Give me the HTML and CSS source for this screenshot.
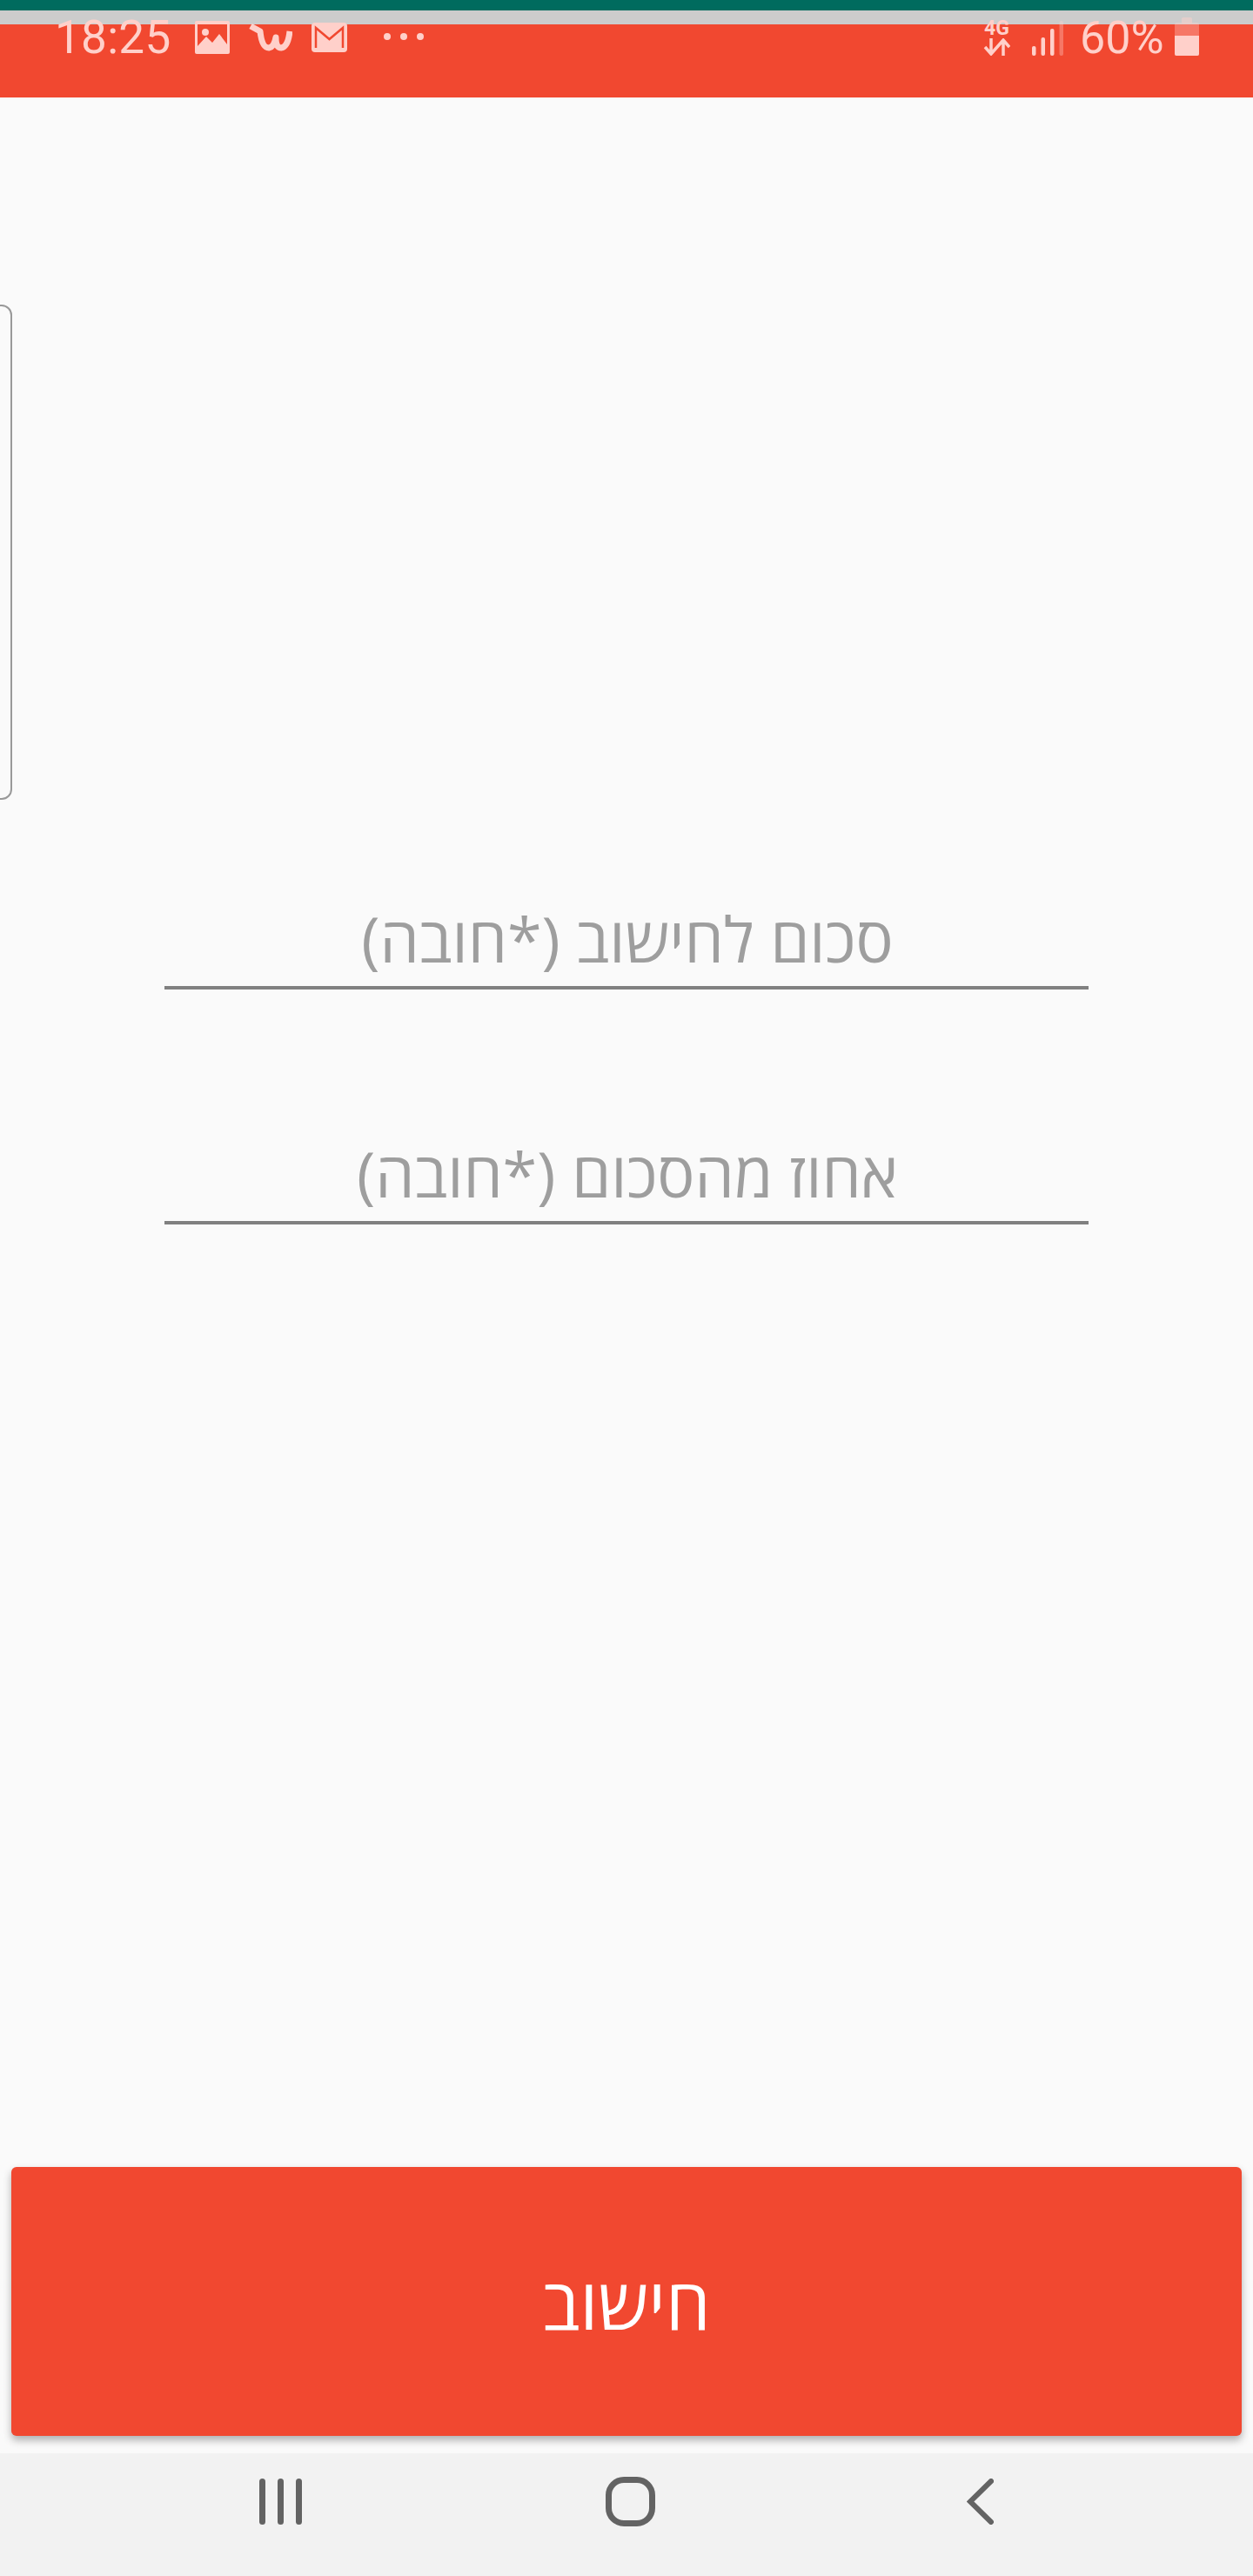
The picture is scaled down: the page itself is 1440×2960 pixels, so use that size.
FILE: index.html
```html
<!DOCTYPE html>
<html lang="he">
  <head>
    <meta charset="UTF-8" />
    <meta name="viewport" content="width=device-width, initial-scale=1.0" />
    <title>חישוב אחוזים</title>
    <link rel="stylesheet" href="styles.css">
  </head>
  <body>
    <div class="top-strip"></div>

    <!-- Status bar -->
    <div class="status-bar">
      <span class="time">18:25</span>
      <svg class="icon-image" width="40" height="38" viewBox="0 0 40 38">
        <rect width="40" height="38" rx="2" fill="#ffd0ca" />
        <rect x="3" y="4" width="34" height="27" fill="#f14830" />
        <circle cx="12" cy="13" r="4" fill="#ffd0ca" />
        <path d="M3 29 L13 18 L20 25 L28 15 L37 27 V32 H3 Z" fill="#ffd0ca" />
      </svg>
      <svg class="icon-wish" width="50" height="34" viewBox="0 0 50 34">
        <path d="M2 4 L13 10 Q15 29 23 29 Q29 28 31 17 Q31 29 37 29 Q45 28 47 10" fill="none" stroke="#ffd0ca" stroke-width="7" stroke-linejoin="round" />
      </svg>
      <svg class="icon-mail" width="41" height="34" viewBox="0 0 41 34">
        <rect width="41" height="34" rx="4" fill="#ffd0ca" />
        <path d="M5 29 V6 L20.5 19 L36 6 V29" fill="none" stroke="#f14830" stroke-width="2.5" />
      </svg>
      <div class="dots"><i></i><i></i><i></i></div>

      <div class="status-right">
        <div class="network">
          <span>4G</span>
          <svg width="31" height="20" viewBox="0 0 31 20">
            <path d="M9 0 V17 M2 10 L9 18 L16 10 M23 20 V3 M16 10 L23 2 L30 10" fill="none" stroke="#ffd0ca" stroke-width="3.5" />
          </svg>
        </div>
        <svg class="signal" width="36" height="40" viewBox="0 0 36 40">
          <rect x="0" y="29" width="4.5" height="11" rx="2" fill="#ffd0ca" />
          <rect x="10.5" y="19" width="4.5" height="21" rx="2" fill="#ffd0ca" />
          <rect x="21" y="9" width="4.5" height="31" rx="2" fill="#ffd0ca" />
          <rect x="31.5" y="0" width="4.5" height="40" rx="2" fill="#ffd0ca" opacity="0.35" />
        </svg>
        <span class="battery-text">60%</span>
        <svg class="battery" width="28" height="44" viewBox="0 0 28 44">
          <rect x="8" y="0" width="12" height="7" rx="1.5" fill="#ffd0ca" opacity="0.45" />
          <rect x="0" y="6" width="28" height="38" rx="2" fill="#ffd0ca" opacity="0.35" />
          <path d="M0 21 H28 V42 a2 2 0 0 1 -2 2 H2 a2 2 0 0 1 -2 -2 Z" fill="#ffd0ca" />
        </svg>
      </div>
    </div>

    <div class="content">
      <!-- Edge of a card that is scrolled off to the left -->
      <div class="side-frame"></div>

      <div class="field field-first">סכום לחישוב (*חובה)</div>
      <div class="field field-second">אחוז מהסכום (*חובה)</div>

      <button class="calc-button">חישוב</button>
    </div>

    <!-- Navigation bar -->
    <div class="nav-bar">
      <div class="nav-recents"><i></i><i></i><i></i></div>
      <div class="nav-home"></div>
      <svg class="nav-back" width="31" height="53" viewBox="0 0 31 53">
        <path d="M28 3 L4 26.5 L28 50" fill="none" stroke="#636363" stroke-width="6" stroke-linecap="round" />
      </svg>
    </div>
  </body>
</html>
```

FILE: styles.css
```css
* {
  box-sizing: border-box;
}

body {
  margin: 0;
  width: 1440px;
  height: 2960px;
  display: flex;
  flex-direction: column;
  background-color: #fafafa;
  font-family: "Open Sans", "Liberation Sans", "DejaVu Sans", sans-serif;
}

.top-strip {
  height: 12px;
  background-color: #006b5e;
}

.status-bar {
  height: 100px;
  padding: 0 0 38px 63px;
  display: flex;
  align-items: center;
  background: linear-gradient(#cccccc 16px, #f14830 16px);
  color: #ffd0ca;
  font-family: Roboto, "Liberation Sans", sans-serif;
}

.time {
  width: 161px;
  font-size: 53px;
  letter-spacing: 0.3px;
}

.icon-wish {
  margin-left: 22px;
}

.icon-mail {
  margin-left: 22px;
}

.dots {
  display: flex;
  gap: 11px;
  margin-left: 42px;
  margin-bottom: 2px;
}

.dots i {
  width: 8px;
  height: 8px;
  border-radius: 50%;
  background-color: #ffd0ca;
}

.status-right {
  margin-left: auto;
  width: 310px;
  display: flex;
  align-items: center;
}

.network {
  width: 31px;
  display: flex;
  flex-direction: column;
  align-items: center;
  font-size: 23px;
  font-weight: 700;
  line-height: 22px;
}

.signal {
  margin-left: 25px;
  margin-top: 2px;
}

.battery-text {
  margin-left: 19px;
  font-size: 52px;
}

.battery {
  margin-left: 12px;
  margin-bottom: 3px;
}

.content {
  flex: 1;
  display: flex;
  flex-direction: column;
  overflow: hidden;
}

.side-frame {
  width: 40px;
  height: 569px;
  margin: 238px 0 0 -26px;
  border: 2px solid #999999;
  border-radius: 12px;
}

.field {
  width: 1062px;
  margin-left: 189px;
  padding-left: 2px;
  height: 85px;
  border-bottom: 4px solid #808080;
  color: #9e9e9e;
  font-size: 72px;
  line-height: 52px;
  text-align: center;
  direction: rtl;
  white-space: nowrap;
}

.field-first {
  margin-top: 133px;
}

.field-second {
  margin-top: 185px;
}

.calc-button {
  height: 309px;
  margin: auto 13px 20px;
  padding: 0;
  border: none;
  border-radius: 6px;
  background-color: #f14830;
  color: #ffffff;
  font-family: inherit;
  font-size: 82px;
  box-shadow: 0 5px 10px rgba(0, 0, 0, 0.3);
}

.nav-bar {
  height: 141px;
  padding: 0 0 30px 298px;
  display: flex;
  align-items: center;
  background-color: #f2f2f2;
}

.nav-recents {
  display: flex;
  gap: 14px;
}

.nav-recents i {
  width: 7px;
  height: 53px;
  border-radius: 4px;
  background-color: #636363;
}

.nav-home {
  width: 57px;
  height: 57px;
  margin-left: 349px;
  border: 7px solid #636363;
  border-radius: 21px;
}

.nav-back {
  margin-left: 358px;
}
```
